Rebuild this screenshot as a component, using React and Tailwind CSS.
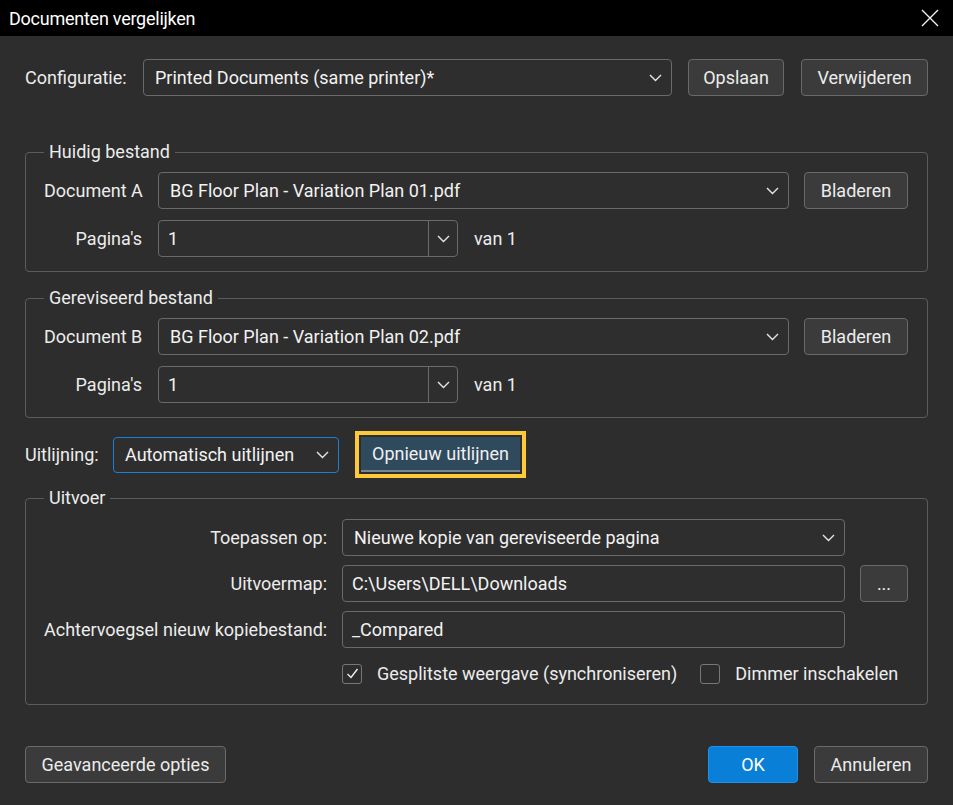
import React from 'react';

const font = { fontFamily: 'Roboto, "Noto Sans", sans-serif' };

function Chevron() {
    return (
        <svg width="13" height="8" viewBox="0 0 13 8" className="shrink-0">
            <polyline points="1,1 6.5,6.5 12,1" fill="none" stroke="#e6e6e6" strokeWidth="1.4" />
        </svg>
    );
}

function Button({ children, className = '' }) {
    return (
        <button className={`h-[37px] rounded-[4px] border border-[#6a6a6a] bg-[#3b3b3b] text-[#ececec] text-[18px] ${className}`}>
            {children}
        </button>
    );
}

function Select({ value, className = '' }) {
    return (
        <div className={`h-[37px] flex items-center justify-between rounded-[4px] border border-[#6a6a6a] bg-[#2e2e2e] pl-[11px] pr-[9px] ${className}`}>
            <span className="text-[18px] text-[#f2f2f2]">{value}</span>
            <Chevron />
        </div>
    );
}

function Input({ value, className = '' }) {
    return (
        <div className={`h-[37px] flex items-center rounded-[4px] border border-[#6a6a6a] bg-[#2e2e2e] px-[9px] ${className}`}>
            <span className="text-[18px] text-[#f2f2f2]">{value}</span>
        </div>
    );
}

function PageCombo() {
    return (
        <div className="h-[37px] w-[300px] flex rounded-[4px] border border-[#6a6a6a] bg-[#2e2e2e]">
            <div className="flex-1 flex items-center px-[9px] text-[18px] text-[#f2f2f2]">1</div>
            <div className="w-[29px] border-l border-[#6a6a6a] flex items-center justify-center">
                <Chevron />
            </div>
        </div>
    );
}

function Group({ title, children, className = '' }) {
    return (
        <fieldset className={`rounded-[4px] border border-[#5c5c5c] px-[18px] ${className}`}>
            <legend className="px-[5px] text-[18px] leading-[20px] text-[#ececec]">{title}</legend>
            {children}
        </fieldset>
    );
}

function FileGroup({ title, label, file }) {
    return (
        <Group title={title} className="pt-[10px] pb-[14px]">
            <div className="flex flex-col gap-[11px]">
                <div className="flex items-center">
                    <span className="w-[98px] text-right text-[18px] text-[#ececec] whitespace-nowrap">{label}</span>
                    <Select value={file} className="ml-[16px] w-[631px]" />
                    <Button className="ml-[15px] w-[104px]">Bladeren</Button>
                </div>
                <div className="flex items-center">
                    <span className="w-[98px] text-right text-[18px] text-[#ececec]">Pagina's</span>
                    <div className="ml-[16px]"><PageCombo /></div>
                    <span className="ml-[16px] text-[18px] text-[#ececec]">van 1</span>
                </div>
            </div>
        </Group>
    );
}

function Checkbox({ checked, label }) {
    return (
        <div className="flex items-center gap-[15px]">
            <div className="w-[20px] h-[20px] rounded-[3px] border border-[#777] flex items-center justify-center">
                {checked && (
                    <svg width="13" height="11" viewBox="0 0 13 11">
                        <polyline points="1.5,6 5,9.5 11.5,1" fill="none" stroke="#f0f0f0" strokeWidth="1.4" />
                    </svg>
                )}
            </div>
            <span className="text-[18px] text-[#ececec]">{label}</span>
        </div>
    );
}

export default function App() {
    return (
        <div className="w-[953px] h-[805px] bg-[#2d2d2d] flex flex-col text-[#ececec]" style={font}>
            {/* Title bar */}
            <div className="h-[36px] bg-black flex items-center justify-between pl-[9px] pr-[14px] shrink-0">
                <span className="text-[18px] tracking-[-0.25px] text-white">Documenten vergelijken</span>
                <svg width="18" height="18" viewBox="0 0 18 18">
                    <path d="M1 1 L17 17 M17 1 L1 17" stroke="#f0f0f0" strokeWidth="1.4" />
                </svg>
            </div>

            <div className="flex flex-col px-[25px] pt-[23px]">
                {/* Configuratie */}
                <div className="flex items-center">
                    <span className="w-[118px] text-[18px]">Configuratie:</span>
                    <Select value="Printed Documents (same printer)*" className="w-[529px]" />
                    <Button className="ml-[16px] w-[96px]">Opslaan</Button>
                    <Button className="ml-[17px] w-[127px]">Verwijderen</Button>
                </div>

                <div className="mt-[46px]">
                    <FileGroup title="Huidig bestand" label="Document A" file="BG Floor Plan - Variation Plan 01.pdf" />
                </div>
                <div className="mt-[16px]">
                    <FileGroup title="Gereviseerd bestand" label="Document B" file="BG Floor Plan - Variation Plan 02.pdf" />
                </div>

                {/* Uitlijning */}
                <div className="mt-[13px] flex items-center h-[47px]">
                    <span className="w-[88px] text-[18px]">Uitlijning:</span>
                    <div className="h-[36px] w-[226px] flex items-center justify-between rounded-[4px] border border-[#1a80d6] bg-[#2e2e2e] pl-[11px] pr-[9px]">
                        <span className="text-[18px] text-[#f2f2f2]">Automatisch uitlijnen</span>
                        <Chevron />
                    </div>
                    <div className="ml-[16px] h-[47px] w-[171px] border-[4px] border-[#fcc93a] p-[2px] bg-[#2d2d2d]">
                        <button className="w-full h-full bg-[#2f4a5d] border-b-2 border-[#7a8792] text-[18px] text-[#f0f0f0]">
                            Opnieuw uitlijnen
                        </button>
                    </div>
                </div>

                {/* Uitvoer */}
                <div className="mt-[10px]">
                    <Group title="Uitvoer" className="pt-[11px] pb-[17px]">
                        <div className="flex flex-col gap-[9px]">
                            <div className="flex items-center">
                                <span className="w-[283px] text-right text-[18px]">Toepassen op:</span>
                                <Select value="Nieuwe kopie van gereviseerde pagina" className="ml-[15px] w-[503px]" />
                            </div>
                            <div className="flex items-center">
                                <span className="w-[283px] text-right text-[18px]">Uitvoermap:</span>
                                <Input value="C:\Users\DELL\Downloads" className="ml-[15px] w-[503px]" />
                                <Button className="ml-[15px] w-[48px]">...</Button>
                            </div>
                            <div className="flex items-center">
                                <span className="w-[283px] text-right text-[18px] whitespace-nowrap">Achtervoegsel nieuw kopiebestand:</span>
                                <Input value="_Compared" className="ml-[15px] w-[503px]" />
                            </div>
                            <div className="flex items-center pl-[298px] gap-[23px] mt-[3px]">
                                <Checkbox checked label="Gesplitste weergave (synchroniseren)" />
                                <Checkbox label="Dimmer inschakelen" />
                            </div>
                        </div>
                    </Group>
                </div>

                {/* Footer */}
                <div className="mt-[41px] flex items-center">
                    <Button className="w-[201px]">Geavanceerde opties</Button>
                    <button className="ml-auto h-[37px] w-[90px] rounded-[4px] border border-[#1e90ee] bg-[#0a7fd8] text-[18px] text-white">OK</button>
                    <Button className="ml-[16px] w-[114px]">Annuleren</Button>
                </div>
            </div>
        </div>
    );
}
